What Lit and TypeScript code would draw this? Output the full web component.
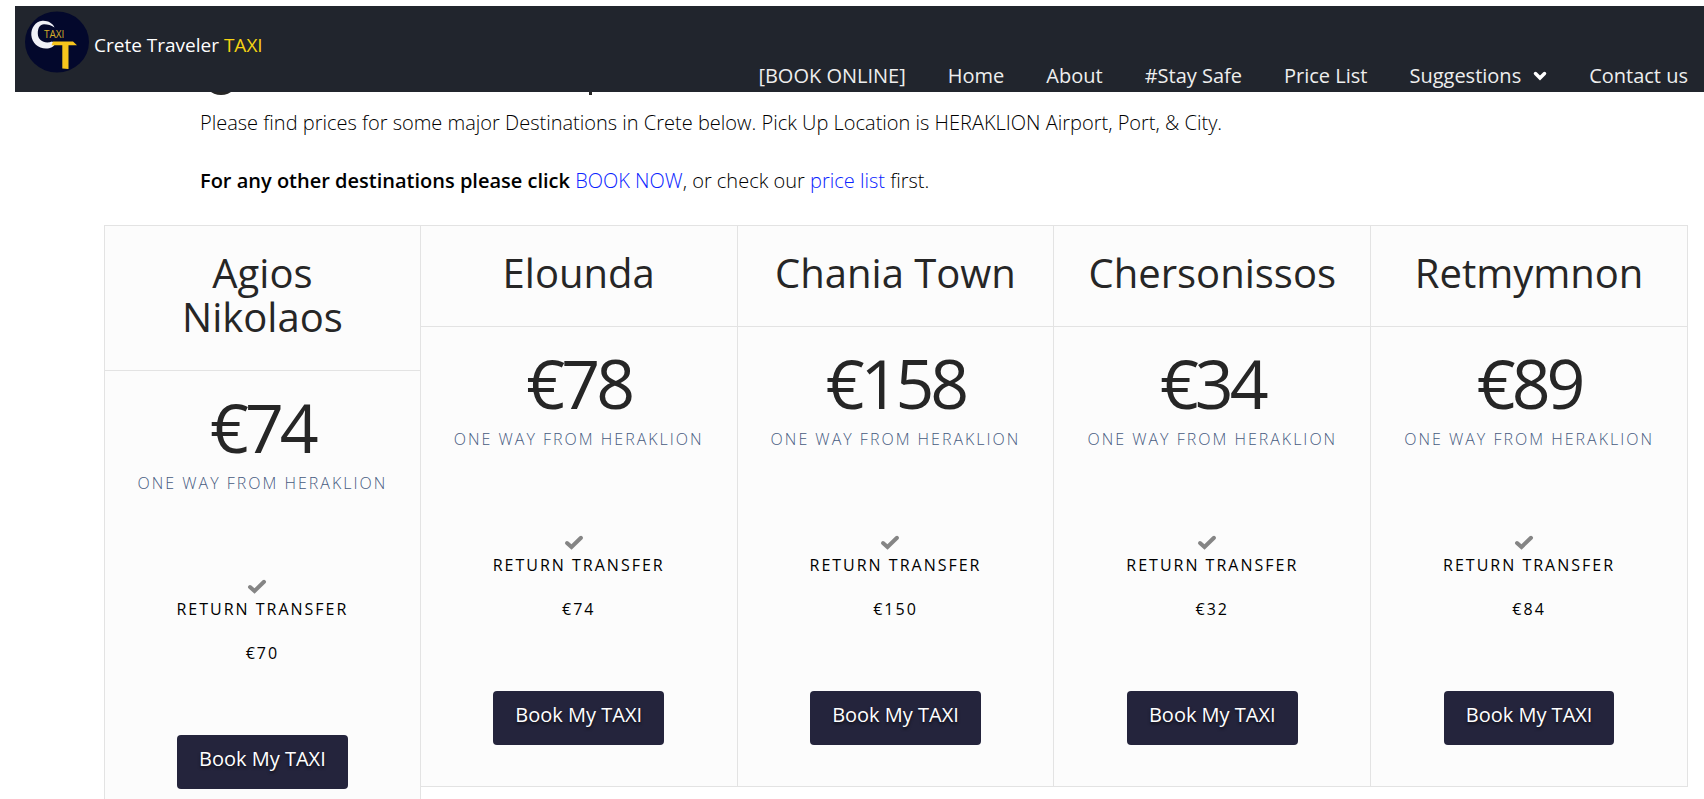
import { LitElement, html, css } from "lit";
import { customElement, property } from "lit/decorators.js";

interface Fare {
  place: string;
  oneWay: number;
  back: number;
}

const FARES: Fare[] = [
  { place: "Agios Nikolaos", oneWay: 74, back: 70 },
  { place: "Elounda", oneWay: 78, back: 74 },
  { place: "Chania Town", oneWay: 158, back: 150 },
  { place: "Chersonissos", oneWay: 34, back: 32 },
  { place: "Retmymnon", oneWay: 89, back: 84 },
];

const LINKS = ["[BOOK ONLINE]", "Home", "About", "#Stay Safe", "Price List", "Suggestions", "Contact us"];

@customElement("site-header")
export class SiteHeader extends LitElement {
  static styles = css`
    :host {
      display: flex;
      justify-content: space-between;
      box-sizing: border-box;
      min-height: 86px;
      padding: 0 16px 0 10px;
      background: #21252d;
      color: #fff;
    }
    .brand {
      display: flex;
      align-items: center;
      align-self: flex-start;
      gap: 5px;
      padding-top: 5px;
      font-size: 19px;
      line-height: 24px;
      color: #fff;
      text-decoration: none;
    }
    .logo {
      display: block;
      width: 64px;
      height: 62px;
    }
    .name {
      padding-top: 6px;
    }
    .gold {
      color: #f5d313;
    }
    .nav {
      align-self: flex-end;
    }
    .menu {
      display: flex;
      gap: 42px;
      margin: 0;
      padding: 0 0 3px;
      list-style: none;
    }
    .link {
      display: flex;
      align-items: center;
      gap: 12px;
      font-size: 20px;
      line-height: 26px;
      white-space: nowrap;
      color: #eee;
      text-decoration: none;
    }
    .chevron {
      width: 14px;
      height: 10px;
      color: #fff;
    }
  `;

  render() {
    return html`
      <a class="brand" href="#home">
        <svg class="logo" viewBox="0 0 64 62" aria-hidden="true">
          <ellipse cx="32" cy="31" rx="32" ry="30.5" fill="#03082c" />
          <path
            d="M29.500 16.500 C28 12.500 23 9.500 17.500 9.800 C10 10.500 6 17.500 6.300 24 C7 32 13 37.500 21 37.500 C25.500 37.500 29 35.500 30.500 32.500 L27 30.500 C20 33.500 12.800 29.500 12.800 22.500 C12.800 17 15 13.300 19 13.300 C23 13.300 26 14.500 29.500 16.500Z"
            fill="#f0f1f8"
          />
          <path d="M28 30.500 H48 L52 34.300 H43.500 V58 L37.300 57.500 V34.300 H26.500Z" fill="#f8c51c" />
          <text x="19" y="27" font-size="10" fill="#d6ae2a">TAXI</text>
        </svg>
        <span class="name">Crete Traveler <span class="gold">TAXI</span></span>
      </a>
      <nav class="nav">
        <ul class="menu">
          ${LINKS.map(
            (name) => html`<li>
              <a class="link" href="#menu"
                >${name}${name === "Suggestions"
                  ? html`<svg class="chevron" viewBox="0 0 14 10" aria-hidden="true">
                      <path
                        d="M2.500 2.500 L7 7 L11.500 2.500"
                        fill="none"
                        stroke="currentColor"
                        stroke-width="3.500"
                        stroke-linecap="round"
                      />
                    </svg>`
                  : ""}</a
              >
            </li>`
          )}
        </ul>
      </nav>
    `;
  }
}

@customElement("fare-card")
export class FareCard extends LitElement {
  @property({ attribute: false }) fare!: Fare;

  static styles = css`
    :host {
      display: block;
      border: 1px solid #e3e3e3;
      background: #fcfcfc;
      text-align: center;
    }
    .place {
      margin: 0;
      padding: 25px 28px 31px;
      border-bottom: 1px solid #e3e3e3;
      font-size: 40px;
      font-weight: 400;
      line-height: 44px;
      color: #262626;
    }
    .price {
      margin: 0;
      padding-top: 21px;
      font-size: 68px;
      line-height: 70px;
      letter-spacing: -4px;
      color: #262626;
    }
    .note {
      margin: 0;
      padding-top: 10px;
      font-size: 16px;
      font-weight: 300;
      line-height: 22px;
      letter-spacing: 2px;
      color: #465a80;
    }
    .back {
      padding-top: 84px;
      font-size: 16px;
      line-height: 22px;
      letter-spacing: 2px;
      color: #000;
    }
    .mark {
      display: flex;
      justify-content: center;
      padding: 0 10px 4px 0;
    }
    .check {
      width: 20px;
      height: 16px;
    }
    .label {
      margin: 0;
    }
    .sum {
      margin: 0;
      padding-top: 22px;
    }
    .book {
      display: block;
      margin: 71px auto 41px;
      padding: 12px 22px 18px;
      border: 0;
      border-radius: 4px;
      background: #24243c;
      font-family: inherit;
      font-size: 20px;
      line-height: 24px;
      color: #fff;
      text-shadow: 0 2px 3px rgba(0, 0, 0, 0.6);
    }
  `;

  render() {
    return html`
      <h2 class="place">${this.fare.place}</h2>
      <p class="price">€${this.fare.oneWay}</p>
      <p class="note">ONE WAY FROM HERAKLION</p>
      <div class="back">
        <div class="mark">
          <svg class="check" viewBox="0 0 20 16" aria-hidden="true">
            <path
              d="M3 9 L7.500 13 L17 3.800"
              fill="none"
              stroke="#858585"
              stroke-width="4"
              stroke-linecap="round"
            />
          </svg>
        </div>
        <p class="label">RETURN TRANSFER</p>
        <p class="sum">€${this.fare.back}</p>
      </div>
      <button class="book" type="button">Book My TAXI</button>
    `;
  }
}

@customElement("app-root")
export class AppRoot extends LitElement {
  static styles = css`
    :host {
      display: block;
      padding-top: 6px;
      background: #fff;
      font-family: "Open Sans", "Noto Sans", sans-serif;
      color: #000;
    }
    .header {
      position: relative;
      z-index: 1;
      margin-left: 15px;
    }
    .scrolled {
      display: flex;
      align-items: flex-end;
      gap: 350px;
      height: 36px;
      margin-top: -33px;
      padding-left: 203px;
    }
    .disc {
      width: 36px;
      height: 36px;
      border-radius: 50%;
      background: #262626;
    }
    .stem {
      width: 3px;
      height: 12px;
      background: #262626;
    }
    .intro {
      padding: 13px 200px 1px;
      font-size: 20px;
      font-weight: 300;
      line-height: 29px;
    }
    .text {
      margin: 0 0 29px;
    }
    .strong {
      font-weight: 600;
    }
    .inline {
      color: #0a24ff;
      text-decoration: none;
    }
    .fares {
      display: grid;
      grid-template-columns: repeat(5, minmax(0, 1fr));
      align-items: start;
      padding: 0 16px 0 104px;
    }
    .fare + .fare {
      margin-left: -1px;
    }
  `;

  render() {
    return html`
      <site-header class="header"></site-header>
      <main>
        <div class="scrolled" aria-hidden="true">
          <span class="disc"></span>
          <span class="stem"></span>
        </div>
        <section class="intro">
          <p class="text">
            Please find prices for some major Destinations in Crete below. Pick Up Location is HERAKLION Airport, Port,
            &amp; City.
          </p>
          <p class="text">
            <strong class="strong">For any other destinations please click</strong>
            <a class="inline" href="#book">BOOK NOW</a>, or check our <a class="inline" href="#prices">price list</a>
            first.
          </p>
        </section>
        <section class="fares">
          ${FARES.map((fare) => html`<fare-card class="fare" .fare=${fare}></fare-card>`)}
        </section>
      </main>
    `;
  }
}
